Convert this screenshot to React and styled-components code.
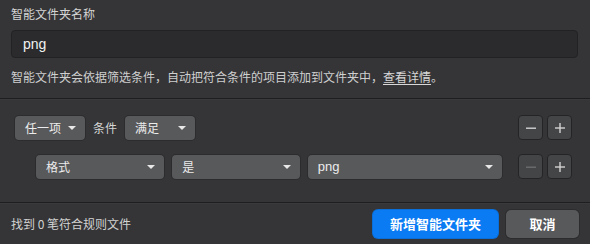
import React from "react";
import styled, { createGlobalStyle } from "styled-components";

const Global = createGlobalStyle`
  html, body { margin: 0; padding: 0; background: #353537; }
  body { font-family: "Noto Sans CJK SC", "Liberation Sans", sans-serif; color: #d8d8d8; }
  * { box-sizing: border-box; }
`;

const Page = styled.div`
  width: 590px;
  height: 244px;
  background: #353537;
  display: flex;
  flex-direction: column;
`;

const Top = styled.div`
  padding: 5px 12px 0 11px;
  display: flex;
  flex-direction: column;
`;

const Label = styled.div`
  font-size: 12px;
  line-height: 18px;
  color: #d4d4d4;
`;

const Input = styled.div`
  margin-top: 7px;
  height: 28px;
  border: 1px solid #222224;
  border-radius: 4px;
  background: #2b2b2d;
  color: #f2f2f2;
  font-family: "Liberation Sans", sans-serif;
  font-size: 14px;
  display: flex;
  align-items: center;
  padding-left: 11px;
`;

const Desc = styled.div`
  margin-top: 10px;
  font-size: 12px;
  line-height: 18px;
  color: #cfcfcf;
  a { color: #d8d8d8; text-decoration: underline; text-underline-offset: 2px; }
`;

const Divider = styled.div`
  margin-top: ${(p) => p.$top}px;
  height: 1px;
  background: #1e1e20;
  box-shadow: 0 1px 0 #3a3a3c;
`;

const Rules = styled.div`
  padding: 16px 18px 0 15px;
  display: flex;
  flex-direction: column;
  gap: 14px;
  height: 103px;
`;

const Row = styled.div`
  display: flex;
  align-items: center;
  gap: 8px;
  padding-left: ${(p) => p.$indent || 0}px;
`;

const Select = styled.div`
  width: ${(p) => p.$w}px;
  height: 24px;
  border-radius: 4px;
  background: #58595b;
  box-shadow: 0 0 0 1px #2c2c2e;
  display: flex;
  align-items: center;
  justify-content: space-between;
  padding: 0 9px 0 10px;
  font-size: 12px;
  color: #ececec;
  span.latin { font-family: "Liberation Sans", sans-serif; font-size: 13px; }
`;

const Caret = styled.span`
  width: 0;
  height: 0;
  border-left: 4px solid transparent;
  border-right: 4px solid transparent;
  border-top: 4px solid #e8e8e8;
`;

const Text = styled.span`
  font-size: 12px;
  color: #d4d4d4;
`;

const Spacer = styled.div`
  flex: 1;
`;

const Steppers = styled.div`
  display: flex;
  gap: 4px;
`;

const Step = styled.div`
  width: 25px;
  height: 25px;
  border-radius: 4px;
  background: #444547;
  border: 1px solid #242426;
  display: flex;
  align-items: center;
  justify-content: center;
  color: ${(p) => (p.$disabled ? "#6c6d6f" : "#d2d2d2")};
`;

const Footer = styled.div`
  flex: 1;
  display: flex;
  align-items: center;
  padding: 0 11px 0 11px;
  gap: 8px;
`;

const FootText = styled.span`
  font-size: 12px;
  color: #d2d2d2;
  flex: 1;
`;

const Button = styled.div`
  height: 28px;
  width: ${(p) => p.$w}px;
  border-radius: 5px;
  background: ${(p) => (p.$primary ? "#0a7bf3" : "#58595b")};
  color: #fff;
  font-size: 13px;
  font-weight: 700;
  display: flex;
  align-items: center;
  justify-content: center;
  box-shadow: 0 0 0 1px ${(p) => (p.$primary ? "#0a6fd9" : "#2c2c2e")};
`;

const Minus = () => (
  <svg width="10" height="10" viewBox="0 0 10 10">
    <rect x="0" y="4.5" width="10" height="1.4" fill="currentColor" />
  </svg>
);
const Plus = () => (
  <svg width="10" height="10" viewBox="0 0 10 10">
    <rect x="0" y="4.3" width="10" height="1.4" fill="currentColor" />
    <rect x="4.3" y="0" width="1.4" height="10" fill="currentColor" />
  </svg>
);

export default function App() {
  return (
    <Page>
      <Global />
      <Top>
        <Label>智能文件夹名称</Label>
        <Input>png</Input>
        <Desc>
          智能文件夹会依据筛选条件，自动把符合条件的项目添加到文件夹中，<a>查看详情</a>。
        </Desc>
      </Top>
      <Divider $top={12} />
      <Rules>
        <Row>
          <Select $w={70}>
            任一项
            <Caret />
          </Select>
          <Text>条件</Text>
          <Select $w={70}>
            满足
            <Caret />
          </Select>
          <Spacer />
          <Steppers>
            <Step>
              <Minus />
            </Step>
            <Step>
              <Plus />
            </Step>
          </Steppers>
        </Row>
        <Row $indent={21}>
          <Select $w={130}>
            格式
            <Caret />
          </Select>
          <Select $w={129}>
            是
            <Caret />
          </Select>
          <Select $w={197}>
            <span className="latin">png</span>
            <Caret />
          </Select>
          <Spacer />
          <Steppers>
            <Step $disabled>
              <Minus />
            </Step>
            <Step>
              <Plus />
            </Step>
          </Steppers>
        </Row>
      </Rules>
      <Divider $top={0} />
      <Footer>
        <FootText>找到 0 笔符合规则文件</FootText>
        <Button $primary $w={125}>新增智能文件夹</Button>
        <Button $w={73}>取消</Button>
      </Footer>
    </Page>
  );
}
